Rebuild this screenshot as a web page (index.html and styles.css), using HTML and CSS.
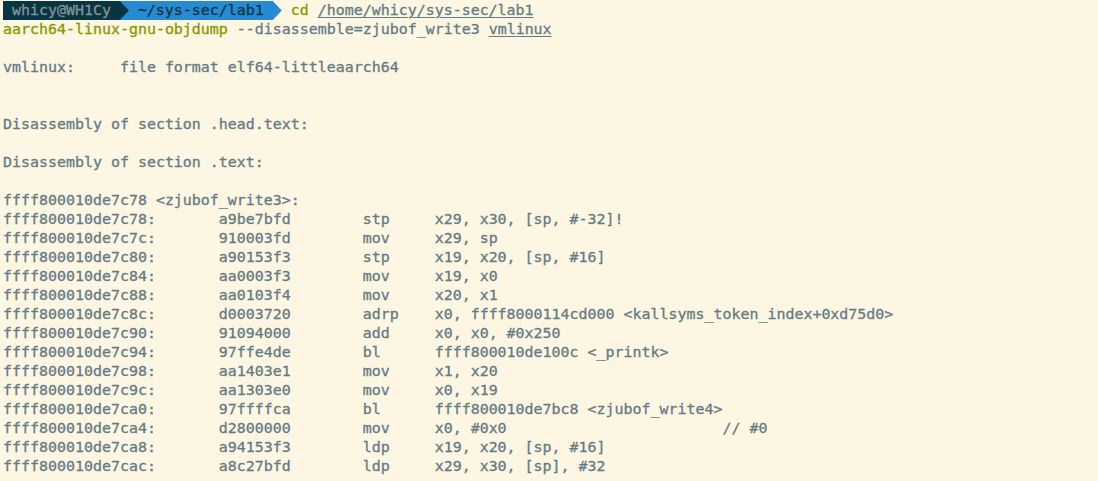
FILE: index.html
```html
<!DOCTYPE html>
<html lang="en">
<head>
<meta charset="utf-8">
<title>Terminal</title>
<link rel="stylesheet" href="styles.css">
</head>
<body>
<div class="terminal">
<div class="prompt"><span class="seg user">whicy@WH1Cy</span><span class="sep sep-user"></span><span class="seg dir">~/sys-sec/lab1</span><span class="sep sep-dir"></span> <span class="cmd">cd</span> <span class="path">/home/whicy/sys-sec/lab1</span></div>
<pre class="out"><span class="cmd">aarch64-linux-gnu-objdump</span> --disassemble=zjubof_write3 <span class="path">vmlinux</span>

vmlinux:     file format elf64-littleaarch64


Disassembly of section .head.text:

Disassembly of section .text:

ffff800010de7c78 &lt;zjubof_write3&gt;:
ffff800010de7c78:	a9be7bfd 	stp	x29, x30, [sp, #-32]!
ffff800010de7c7c:	910003fd 	mov	x29, sp
ffff800010de7c80:	a90153f3 	stp	x19, x20, [sp, #16]
ffff800010de7c84:	aa0003f3 	mov	x19, x0
ffff800010de7c88:	aa0103f4 	mov	x20, x1
ffff800010de7c8c:	d0003720 	adrp	x0, ffff8000114cd000 &lt;kallsyms_token_index+0xd75d0&gt;
ffff800010de7c90:	91094000 	add	x0, x0, #0x250
ffff800010de7c94:	97ffe4de 	bl	ffff800010de100c &lt;_printk&gt;
ffff800010de7c98:	aa1403e1 	mov	x1, x20
ffff800010de7c9c:	aa1303e0 	mov	x0, x19
ffff800010de7ca0:	97ffffca 	bl	ffff800010de7bc8 &lt;zjubof_write4&gt;
ffff800010de7ca4:	d2800000 	mov	x0, #0x0                	// #0
ffff800010de7ca8:	a94153f3 	ldp	x19, x20, [sp, #16]
ffff800010de7cac:	a8c27bfd 	ldp	x29, x30, [sp], #32</pre>
</div>
</body>
</html>
```
FILE: styles.css
```css
html, body {
  margin: 0;
  padding: 0;
  background: #fdf6e3;
}

.terminal {
  padding: 1px 0 0 3px;
  height: 480px;
  box-sizing: border-box;
  overflow: hidden;
  font-family: "DejaVu Sans Mono", "Liberation Mono", monospace;
  font-size: 14.95px;
  line-height: 19px;
  color: #657b83;
  background: #fdf6e3;
  -webkit-text-stroke: 0.3px currentColor;
}

.prompt {
  height: 19px;
  white-space: pre;
}

.out {
  margin: 0;
  font: inherit;
  line-height: 19px;
  white-space: pre;
  tab-size: 8;
  -moz-tab-size: 8;
}

.seg {
  display: inline-block;
  height: 19px;
  vertical-align: top;
  padding: 0 1ch;
}

.user {
  background: #073642;
  color: #839496;
}

.dir {
  background: #268bd2;
  color: #073642;
}

.sep {
  display: inline-block;
  width: 1ch;
  height: 19px;
  vertical-align: top;
  position: relative;
}

.sep::before {
  content: "";
  position: absolute;
  left: 0;
  top: 0;
  width: 100%;
  height: 100%;
  clip-path: polygon(0 0, 100% 50%, 0 100%);
}

.sep-user {
  background: #268bd2;
}

.sep-user::before {
  background: #073642;
}

.sep-dir::before {
  background: #268bd2;
}

.cmd {
  color: #859900;
}

.path {
  text-decoration: underline;
  text-underline-offset: 2px;
}
```
